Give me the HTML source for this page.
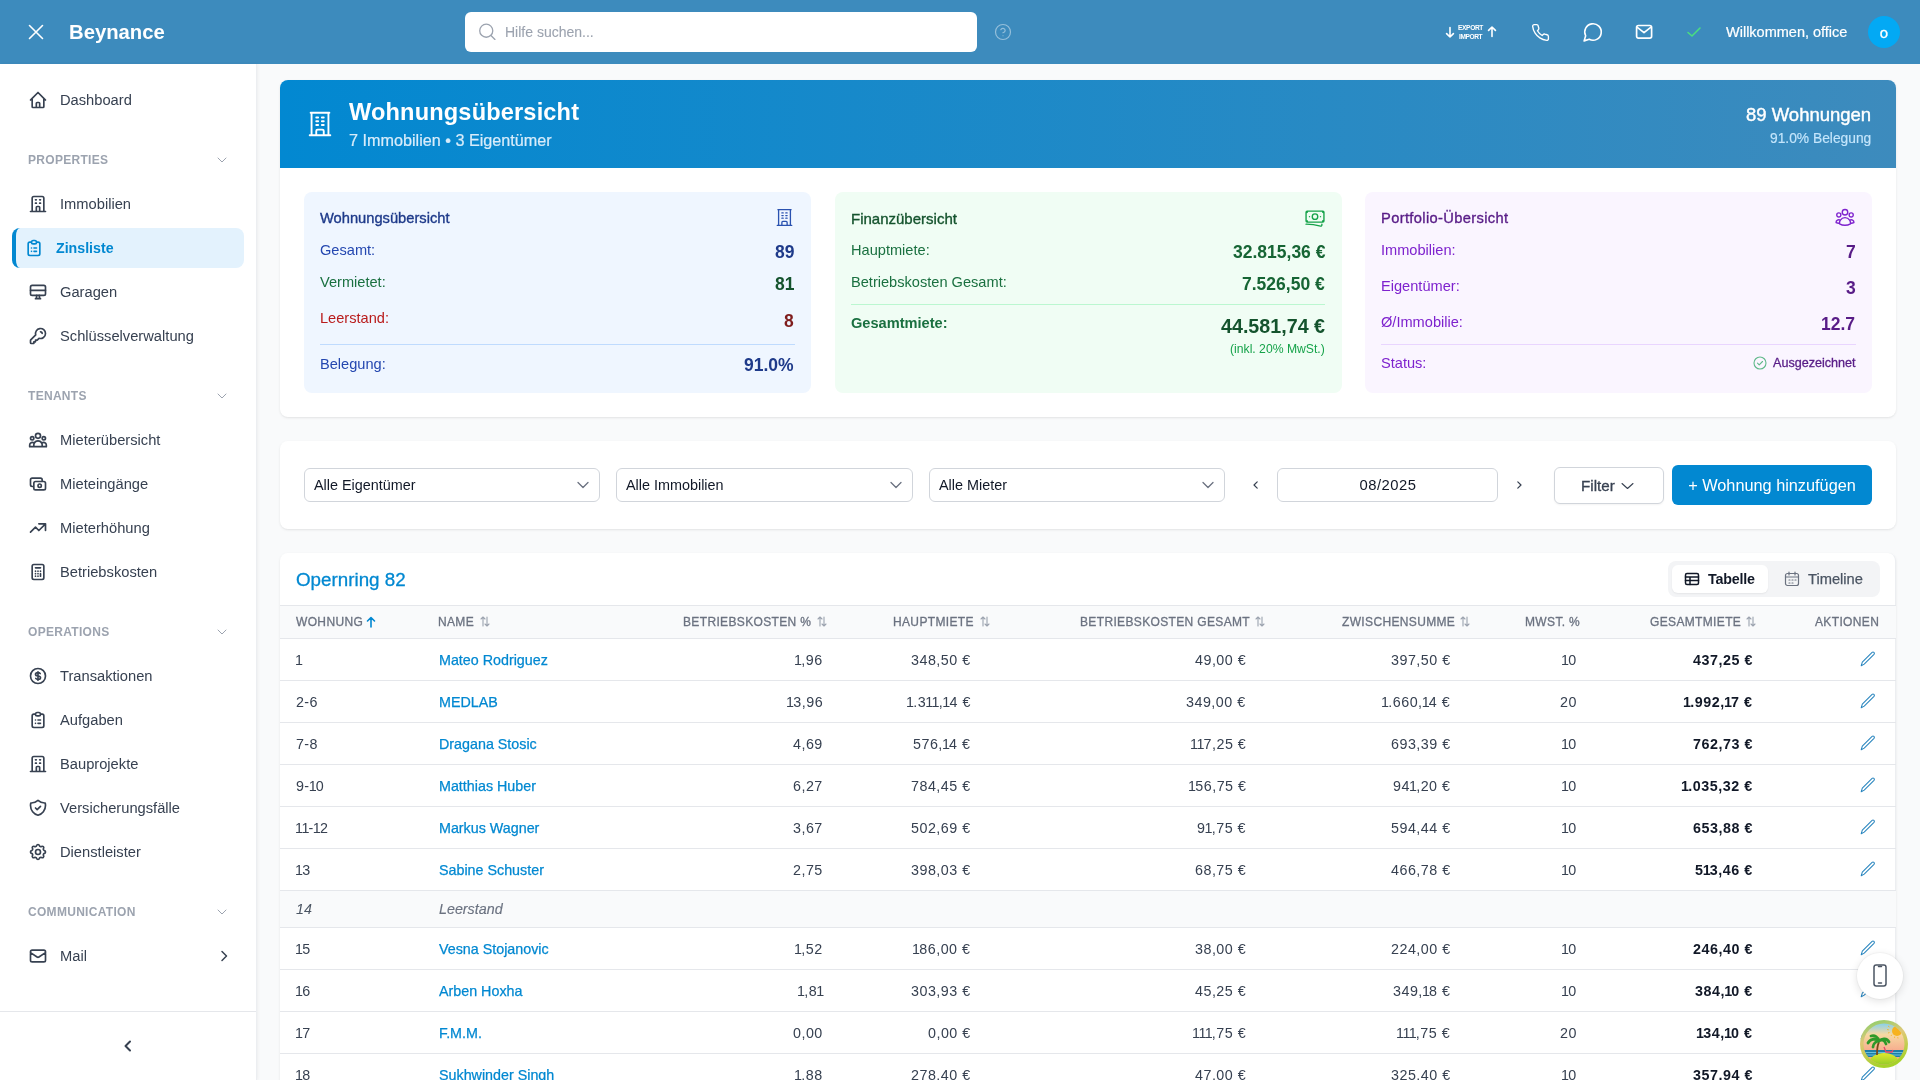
<!DOCTYPE html>
<html><head><meta charset="utf-8">
<style>
*{box-sizing:border-box;margin:0;padding:0}
html,body{width:1920px;height:1080px;overflow:hidden}
body{font-family:"Liberation Sans",sans-serif;background:#f9fafb;color:#374151;position:relative}
.abs{position:absolute}
svg{display:block}
.t{position:absolute;white-space:nowrap;line-height:1;-webkit-font-smoothing:antialiased}
body>div,body>svg{will-change:transform}
</style></head>
<body>
<div class="abs" style="left:0px;top:0px;width:1920px;height:64px;background:#3d8bbd"></div>
<svg class="abs" style="left:28px;top:24px" width="16" height="16" viewBox="0 0 16 16" fill="none" stroke="#fff" stroke-width="1.6" stroke-linecap="round" stroke-linejoin="round"><path d="M1.5 1.5l13 13M14.5 1.5l-13 13"/></svg>
<div class="t" style="top:21.82px;font-size:20.3px;color:#fff;font-weight:700;left:68.5px;">Beynance</div>
<div class="abs" style="left:465px;top:12px;width:512px;height:40px;background:#fff;border-radius:6px"></div>
<svg class="abs" style="left:477.5px;top:23px" width="18" height="18" viewBox="0 0 24 24" fill="none" stroke="#9ca3af" stroke-width="1.75" stroke-linecap="round" stroke-linejoin="round"><circle cx="11" cy="10.3" r="8.7"/><path d="M17.3 16.6L22.6 21.9"/></svg>
<div class="t" style="top:25.05px;font-size:14px;color:#9ca3af;-webkit-text-stroke:0.1px #9ca3af;left:505px;">Hilfe suchen...</div>
<svg class="abs" style="left:994px;top:23px" width="18" height="18" viewBox="0 0 24 24" fill="none" stroke="rgba(255,255,255,0.45)" stroke-width="1.6" stroke-linecap="round" stroke-linejoin="round"><circle cx="12" cy="12" r="10"/><path d="M9.1 9a3 3 0 0 1 5.8 1c0 2-3 3-3 3"/><path d="M12 17h.01"/></svg>
<svg class="abs" style="left:1444px;top:26px" width="12" height="12" viewBox="0 0 12 12" fill="none" stroke="#fff" stroke-width="1.6" stroke-linecap="round" stroke-linejoin="round"><path d="M6 1.5v9.5M2.6 7.6L6 11l3.4-3.4"/></svg>
<div class="t" style="top:24.61px;font-size:6.6px;color:#fff;font-weight:700;letter-spacing:-0.35px;left:1458px;">EXPORT</div>
<div class="t" style="top:33.61px;font-size:6.6px;color:#fff;font-weight:700;letter-spacing:-0.4px;left:1459px;">IMPORT</div>
<svg class="abs" style="left:1486px;top:26px" width="12" height="12" viewBox="0 0 12 12" fill="none" stroke="#fff" stroke-width="1.6" stroke-linecap="round" stroke-linejoin="round"><path d="M6 10.5V1M2.6 4.4L6 1l3.4 3.4"/></svg>
<svg class="abs" style="left:1530.6px;top:22.6px" width="19" height="19" viewBox="0 0 24 24" fill="none" stroke="#fff" stroke-width="1.7" stroke-linecap="round" stroke-linejoin="round"><path d="M22 16.9v3a2 2 0 0 1-2.2 2 19.8 19.8 0 0 1-8.6-3.1 19.5 19.5 0 0 1-6-6A19.8 19.8 0 0 1 2.1 4.2 2 2 0 0 1 4.1 2h3a2 2 0 0 1 2 1.7c.1.9.4 1.8.7 2.7a2 2 0 0 1-.5 2.1L8.1 9.8a16 16 0 0 0 6 6l1.3-1.3a2 2 0 0 1 2.1-.4c.9.3 1.8.6 2.7.7a2 2 0 0 1 1.7 2z"/></svg>
<svg class="abs" style="left:1581.5px;top:20.8px" width="22" height="22" viewBox="0 0 24 24" fill="none" stroke="#fff" stroke-width="1.75" stroke-linecap="round" stroke-linejoin="round"><path d="M7.9 20A9 9 0 1 0 4 16.1L2.3 21.7z"/></svg>
<svg class="abs" style="left:1634.3px;top:23px" width="20" height="17" viewBox="0 0 20 17" fill="none" stroke="#fff" stroke-width="1.7" stroke-linecap="round" stroke-linejoin="round"><rect x="2.6" y="2.5" width="15" height="12.6" rx="1.8"/><path d="M3 4.2L10 9.6 17 4.2"/></svg>
<svg class="abs" style="left:1686px;top:24px" width="16" height="16" viewBox="0 0 16 16" fill="none" stroke="#4ade80" stroke-width="1.6" stroke-linecap="round" stroke-linejoin="round"><path d="M2 8.5l4 3.5 8-8"/></svg>
<div class="t" style="top:25.33px;font-size:14.5px;color:#fff;-webkit-text-stroke:0.2px #fff;left:1726px;">Willkommen, office</div>
<div class="abs" style="left:1868px;top:16px;width:32px;height:32px;background:#03a9f4;border-radius:50%"></div>
<div class="t" style="top:24.90px;font-size:15px;color:#fff;-webkit-text-stroke:0.3px #fff;left:1584px;width:600px;text-align:center;">o</div>
<div class="abs" style="left:0px;top:64px;width:256px;height:1016px;background:#fff;box-shadow:1px 0 3px rgba(0,0,0,0.05);border-right:1px solid #eceef1;width:257px"></div>
<svg class="abs" style="left:28px;top:90px" width="20" height="20" viewBox="0 0 24 24" fill="none" stroke="#374151" stroke-width="2" stroke-linecap="round" stroke-linejoin="round"><path d="M3 12l2-2m0 0l7-7 7 7M5 10v10a1 1 0 001 1h3m10-11l2 2m-2-2v10a1 1 0 01-1 1h-3m-6 0a1 1 0 001-1v-4a1 1 0 011-1h2a1 1 0 011 1v4a1 1 0 001 1m-6 0h6"/></svg>
<div class="t" style="top:92.86px;font-size:14.7px;color:#374151;left:60px;">Dashboard</div>
<div class="t" style="top:154.24px;font-size:12px;color:#9ca3af;font-weight:700;letter-spacing:0.3px;left:28px;">PROPERTIES</div>
<svg class="abs" style="left:216px;top:156px" width="12" height="8" viewBox="0 0 12 8" fill="none" stroke="#9ca3af" stroke-width="1" stroke-linecap="round" stroke-linejoin="round"><path d="M2 2l4 4 4-4"/></svg>
<svg class="abs" style="left:28px;top:194px" width="20" height="20" viewBox="0 0 24 24" fill="none" stroke="#374151" stroke-width="2" stroke-linecap="round" stroke-linejoin="round"><path d="M19 21V5a2 2 0 00-2-2H7a2 2 0 00-2 2v16m14 0h2m-2 0h-5m-9 0H3m2 0h5M9 7h1m-1 4h1m4-4h1m-1 4h1m-5 10v-5a1 1 0 011-1h2a1 1 0 011 1v5m-4 0h4"/></svg>
<div class="t" style="top:196.86px;font-size:14.7px;color:#374151;left:60px;">Immobilien</div>
<div class="abs" style="left:12px;top:228px;width:232px;height:40px;background:#e3f2fd;border-radius:8px;border-left:4px solid #0288d1"></div>
<svg class="abs" style="left:24px;top:238px" width="20" height="20" viewBox="0 0 24 24" fill="none" stroke="#0288d1" stroke-width="2" stroke-linecap="round" stroke-linejoin="round"><path d="M9 5H7a2 2 0 00-2 2v12a2 2 0 002 2h10a2 2 0 002-2V7a2 2 0 00-2-2h-2M9 5a2 2 0 002 2h2a2 2 0 002-2M9 5a2 2 0 012-2h2a2 2 0 012 2m-3 7h3m-3 4h3m-6-4h.01M9 16h.01"/></svg>
<div class="t" style="top:241.08px;font-size:14.2px;color:#0288d1;font-weight:700;left:55.6px;">Zinsliste</div>
<svg class="abs" style="left:28px;top:282px" width="20" height="20" viewBox="0 0 24 24" fill="none" stroke="#374151" stroke-width="2" stroke-linecap="round" stroke-linejoin="round"><rect x="3" y="4" width="18" height="12" rx="2"/><path d="M3 10h18M9 20h6M10.5 16l-.5 4M13.5 16l.5 4"/></svg>
<div class="t" style="top:284.86px;font-size:14.7px;color:#374151;left:60px;">Garagen</div>
<svg class="abs" style="left:28px;top:326px" width="20" height="20" viewBox="0 0 24 24" fill="none" stroke="#374151" stroke-width="2" stroke-linecap="round" stroke-linejoin="round"><path d="M15 7a2 2 0 012 2m4 0a6 6 0 01-7.743 5.743L11 17H9v2H7v2H4a1 1 0 01-1-1v-2.586a1 1 0 01.293-.707l5.964-5.964A6 6 0 1121 9z"/></svg>
<div class="t" style="top:328.86px;font-size:14.7px;color:#374151;left:60px;">Schlüsselverwaltung</div>
<div class="t" style="top:390.24px;font-size:12px;color:#9ca3af;font-weight:700;letter-spacing:0.3px;left:28px;">TENANTS</div>
<svg class="abs" style="left:216px;top:392px" width="12" height="8" viewBox="0 0 12 8" fill="none" stroke="#9ca3af" stroke-width="1" stroke-linecap="round" stroke-linejoin="round"><path d="M2 2l4 4 4-4"/></svg>
<svg class="abs" style="left:28px;top:430px" width="20" height="20" viewBox="0 0 24 24" fill="none" stroke="#374151" stroke-width="2" stroke-linecap="round" stroke-linejoin="round"><path d="M17 20h5v-2a3 3 0 00-5.356-1.857M17 20H7m10 0v-2c0-.656-.126-1.283-.356-1.857M7 20H2v-2a3 3 0 015.356-1.857M7 20v-2c0-.656.126-1.283.356-1.857m0 0a5.002 5.002 0 019.288 0M15 7a3 3 0 11-6 0 3 3 0 016 0zm6 3a2 2 0 11-4 0 2 2 0 014 0zM7 10a2 2 0 11-4 0 2 2 0 014 0z"/></svg>
<div class="t" style="top:432.86px;font-size:14.7px;color:#374151;left:60px;">Mieterübersicht</div>
<svg class="abs" style="left:28px;top:474px" width="20" height="20" viewBox="0 0 24 24" fill="none" stroke="#374151" stroke-width="2" stroke-linecap="round" stroke-linejoin="round"><path d="M17 9V7a2 2 0 00-2-2H5a2 2 0 00-2 2v6a2 2 0 002 2h2m2 4h10a2 2 0 002-2v-6a2 2 0 00-2-2H9a2 2 0 00-2 2v6a2 2 0 002 2zm7-5a2 2 0 11-4 0 2 2 0 014 0z"/></svg>
<div class="t" style="top:476.86px;font-size:14.7px;color:#374151;left:60px;">Mieteingänge</div>
<svg class="abs" style="left:28px;top:518px" width="20" height="20" viewBox="0 0 24 24" fill="none" stroke="#374151" stroke-width="2" stroke-linecap="round" stroke-linejoin="round"><path d="M13 7h8m0 0v8m0-8l-8 8-4-4-6 6"/></svg>
<div class="t" style="top:520.86px;font-size:14.7px;color:#374151;left:60px;">Mieterhöhung</div>
<svg class="abs" style="left:28px;top:562px" width="20" height="20" viewBox="0 0 24 24" fill="none" stroke="#374151" stroke-width="2" stroke-linecap="round" stroke-linejoin="round"><path d="M9 7h6m0 10v-3m-3 3h.01M9 17h.01M9 14h.01M12 14h.01M15 11h.01M12 11h.01M9 11h.01M7 21h10a2 2 0 002-2V5a2 2 0 00-2-2H7a2 2 0 00-2 2v14a2 2 0 002 2z"/></svg>
<div class="t" style="top:564.86px;font-size:14.7px;color:#374151;left:60px;">Betriebskosten</div>
<div class="t" style="top:626.24px;font-size:12px;color:#9ca3af;font-weight:700;letter-spacing:0.3px;left:28px;">OPERATIONS</div>
<svg class="abs" style="left:216px;top:628px" width="12" height="8" viewBox="0 0 12 8" fill="none" stroke="#9ca3af" stroke-width="1" stroke-linecap="round" stroke-linejoin="round"><path d="M2 2l4 4 4-4"/></svg>
<svg class="abs" style="left:28px;top:666px" width="20" height="20" viewBox="0 0 24 24" fill="none" stroke="#374151" stroke-width="2" stroke-linecap="round" stroke-linejoin="round"><path d="M12 8c-1.657 0-3 .895-3 2s1.343 2 3 2 3 .895 3 2-1.343 2-3 2m0-8c1.11 0 2.08.402 2.599 1M12 8V7m0 1v8m0 0v1m0-1c-1.11 0-2.08-.402-2.599-1M21 12a9 9 0 11-18 0 9 9 0 0118 0z"/></svg>
<div class="t" style="top:668.86px;font-size:14.7px;color:#374151;left:60px;">Transaktionen</div>
<svg class="abs" style="left:28px;top:710px" width="20" height="20" viewBox="0 0 24 24" fill="none" stroke="#374151" stroke-width="2" stroke-linecap="round" stroke-linejoin="round"><path d="M9 5H7a2 2 0 00-2 2v12a2 2 0 002 2h10a2 2 0 002-2V7a2 2 0 00-2-2h-2M9 5a2 2 0 002 2h2a2 2 0 002-2M9 5a2 2 0 012-2h2a2 2 0 012 2m-3 7h3m-3 4h3m-6-4h.01M9 16h.01"/></svg>
<div class="t" style="top:712.86px;font-size:14.7px;color:#374151;left:60px;">Aufgaben</div>
<svg class="abs" style="left:28px;top:754px" width="20" height="20" viewBox="0 0 24 24" fill="none" stroke="#374151" stroke-width="2" stroke-linecap="round" stroke-linejoin="round"><path d="M19 21V5a2 2 0 00-2-2H7a2 2 0 00-2 2v16m14 0h2m-2 0h-5m-9 0H3m2 0h5M9 7h1m-1 4h1m4-4h1m-1 4h1m-5 10v-5a1 1 0 011-1h2a1 1 0 011 1v5m-4 0h4"/></svg>
<div class="t" style="top:756.86px;font-size:14.7px;color:#374151;left:60px;">Bauprojekte</div>
<svg class="abs" style="left:28px;top:798px" width="20" height="20" viewBox="0 0 24 24" fill="none" stroke="#374151" stroke-width="2" stroke-linecap="round" stroke-linejoin="round"><path d="M9 12l2 2 4-4m5.618-4.016A11.955 11.955 0 0112 2.944a11.955 11.955 0 01-8.618 3.04A12.02 12.02 0 003 9c0 5.591 3.824 10.29 9 11.622 5.176-1.332 9-6.03 9-11.622 0-1.042-.133-2.052-.382-3.016z"/></svg>
<div class="t" style="top:800.86px;font-size:14.7px;color:#374151;left:60px;">Versicherungsfälle</div>
<svg class="abs" style="left:28px;top:842px" width="20" height="20" viewBox="0 0 24 24" fill="none" stroke="#374151" stroke-width="2" stroke-linecap="round" stroke-linejoin="round"><path d="M10.325 4.317c.426-1.756 2.924-1.756 3.35 0a1.724 1.724 0 002.573 1.066c1.543-.94 3.31.826 2.37 2.37a1.724 1.724 0 001.065 2.572c1.756.426 1.756 2.924 0 3.35a1.724 1.724 0 00-1.066 2.573c.94 1.543-.826 3.31-2.37 2.37a1.724 1.724 0 00-2.572 1.065c-.426 1.756-2.924 1.756-3.35 0a1.724 1.724 0 00-2.573-1.066c-1.543.94-3.31-.826-2.37-2.37a1.724 1.724 0 00-1.065-2.572c-1.756-.426-1.756-2.924 0-3.35a1.724 1.724 0 001.066-2.573c-.94-1.543.826-3.31 2.37-2.37.996.608 2.296.07 2.572-1.065z"/><path d="M15 12a3 3 0 11-6 0 3 3 0 016 0z"/></svg>
<div class="t" style="top:844.86px;font-size:14.7px;color:#374151;left:60px;">Dienstleister</div>
<div class="t" style="top:906.24px;font-size:12px;color:#9ca3af;font-weight:700;letter-spacing:0.3px;left:28px;">COMMUNICATION</div>
<svg class="abs" style="left:216px;top:908px" width="12" height="8" viewBox="0 0 12 8" fill="none" stroke="#9ca3af" stroke-width="1" stroke-linecap="round" stroke-linejoin="round"><path d="M2 2l4 4 4-4"/></svg>
<svg class="abs" style="left:28px;top:946px" width="20" height="20" viewBox="0 0 24 24" fill="none" stroke="#374151" stroke-width="2" stroke-linecap="round" stroke-linejoin="round"><path d="M3 8l7.89 5.26a2 2 0 002.22 0L21 8M5 19h14a2 2 0 002-2V7a2 2 0 00-2-2H5a2 2 0 00-2 2v10a2 2 0 002 2z"/></svg>
<div class="t" style="top:948.86px;font-size:14.7px;color:#374151;left:60px;">Mail</div>
<svg class="abs" style="left:218px;top:950px" width="12" height="12" viewBox="0 0 12 12" fill="none" stroke="#374151" stroke-width="1.5" stroke-linecap="round" stroke-linejoin="round"><path d="M4 1.5l4.5 4.5L4 10.5"/></svg>
<div class="abs" style="left:0px;top:1011px;width:256px;height:1px;background:#e5e7eb"></div>
<svg class="abs" style="left:122px;top:1040px" width="12" height="12" viewBox="0 0 12 12" fill="none" stroke="#374151" stroke-width="2" stroke-linecap="round" stroke-linejoin="round"><path d="M8 1.5L3.5 6 8 10.5"/></svg>
<div class="abs" style="left:280px;top:80px;width:1616px;height:337px;background:#fff;border-radius:8px;box-shadow:0 1px 3px rgba(0,0,0,0.07),0 1px 2px rgba(0,0,0,0.04);overflow:hidden"></div>
<div class="abs" style="left:280px;top:80px;width:1616px;height:88px;background:linear-gradient(90deg,#0288d1 0%,#3d8bbd 100%);border-radius:8px 8px 0 0"></div>
<svg class="abs" style="left:305px;top:109px" width="30" height="30" viewBox="0 0 24 24" fill="none" stroke="#fff" stroke-width="1.5" stroke-linecap="round" stroke-linejoin="round"><path d="M3.75 21h16.5M4.5 3h15M5.25 3v18m13.5-18v18M9 6.75h1.5m-1.5 3h1.5m-1.5 3h1.5m3-6H15m-1.5 3H15m-1.5 3H15M9 21v-3.375c0-.621.504-1.125 1.125-1.125h3.75c.621 0 1.125.504 1.125 1.125V21"/></svg>
<div class="t" style="top:101.42px;font-size:23.6px;color:#fff;font-weight:700;letter-spacing:0.15px;left:349px;">Wohnungsübersicht</div>
<div class="t" style="top:132.09px;font-size:16.2px;color:#d8ecfa;-webkit-text-stroke:0.2px #d8ecfa;left:349px;">7 Immobilien • 3 Eigentümer</div>
<div class="t" style="top:105.59px;font-size:18.5px;color:#fff;-webkit-text-stroke:0.4px #fff;right:48.50px;">89 Wohnungen</div>
<div class="t" style="top:131.52px;font-size:13.8px;color:#c4e5fb;-webkit-text-stroke:0.15px #c4e5fb;right:49.00px;">91.0% Belegung</div>
<div class="abs" style="left:304px;top:192px;width:507px;height:201px;background:#eff6ff;border-radius:8px"></div>
<div class="abs" style="left:835px;top:192px;width:507px;height:201px;background:#f0fdf4;border-radius:8px"></div>
<div class="abs" style="left:1365px;top:192px;width:507px;height:201px;background:#faf5ff;border-radius:8px"></div>
<div class="t" style="top:210.96px;font-size:14.7px;color:#1e3a8a;-webkit-text-stroke:0.35px #1e3a8a;left:320px;">Wohnungsübersicht</div>
<svg class="abs" style="left:774px;top:207px" width="21" height="21" viewBox="0 0 24 24" fill="none" stroke="#2a52b0" stroke-width="1.5" stroke-linecap="round" stroke-linejoin="round"><path d="M3.75 21h16.5M4.5 3h15M5.25 3v18m13.5-18v18M9 6.75h1.5m-1.5 3h1.5m-1.5 3h1.5m3-6H15m-1.5 3H15m-1.5 3H15M9 21v-3.375c0-.621.504-1.125 1.125-1.125h3.75c.621 0 1.125.504 1.125 1.125V21"/></svg>
<div class="t" style="top:243.34px;font-size:14.6px;color:#2447b0;left:320px;">Gesamt:</div>
<div class="t" style="top:244.49px;font-size:17.5px;color:#1e3a8a;font-weight:700;right:1126.00px;">89</div>
<div class="t" style="top:275.44px;font-size:14.6px;color:#1a7040;left:320px;">Vermietet:</div>
<div class="t" style="top:276.29px;font-size:17.5px;color:#14532d;font-weight:700;right:1126.00px;">81</div>
<div class="t" style="top:311.44px;font-size:14.6px;color:#b91c1c;left:320px;">Leerstand:</div>
<div class="t" style="top:312.59px;font-size:17.5px;color:#7f1d1d;font-weight:700;right:1126.00px;">8</div>
<div class="abs" style="left:320px;top:344px;width:475px;height:1px;background:#bfdbfe"></div>
<div class="t" style="top:356.54px;font-size:14.6px;color:#2447b0;left:320px;">Belegung:</div>
<div class="t" style="top:357.39px;font-size:17.5px;color:#1e3a8a;font-weight:700;right:1126.00px;">91.0%</div>
<div class="t" style="top:210.70px;font-size:15px;color:#14532d;-webkit-text-stroke:0.35px #14532d;left:851px;">Finanzübersicht</div>
<svg class="abs" style="left:1304px;top:207px" width="22" height="22" viewBox="0 0 24 24" fill="none" stroke="#16a34a" stroke-width="1.5" stroke-linecap="round" stroke-linejoin="round"><path d="M2.25 18.75a60.07 60.07 0 0 1 15.797 2.101c.727.198 1.453-.342 1.453-1.096V18.75M3.75 4.5v.75A.75.75 0 0 1 3 6h-.75m0 0v-.375c0-.621.504-1.125 1.125-1.125H20.25M2.25 6v9m18-10.5v.75c0 .414.336.75.75.75h.75m-1.5-1.5h.375c.621 0 1.125.504 1.125 1.125v9.75c0 .621-.504 1.125-1.125 1.125h-.375m1.5-1.5H21a.75.75 0 0 0-.75.75v.75m0 0H3.75m0 0h-.375a1.125 1.125 0 0 1-1.125-1.125V15m1.5 1.5v-.75A.75.75 0 0 0 3 15h-.75M15 10.5a3 3 0 1 1-6 0 3 3 0 0 1 6 0Zm3 0h.008v.008H18V10.5Zm-12 0h.008v.008H6V10.5Z"/></svg>
<div class="t" style="top:242.64px;font-size:14.6px;color:#1a7040;left:851px;">Hauptmiete:</div>
<div class="t" style="top:243.89px;font-size:17.5px;color:#166534;font-weight:700;right:595.00px;">32.815,36 €</div>
<div class="t" style="top:274.64px;font-size:14.6px;color:#1a7040;left:851px;">Betriebskosten Gesamt:</div>
<div class="t" style="top:275.89px;font-size:17.5px;color:#166534;font-weight:700;right:595.00px;">7.526,50 €</div>
<div class="abs" style="left:851px;top:304px;width:474px;height:1px;background:#bbf7d0"></div>
<div class="t" style="top:316.04px;font-size:14.6px;color:#1a7040;font-weight:700;left:851px;">Gesamtmiete:</div>
<div class="t" style="top:317.32px;font-size:19.7px;color:#14532d;font-weight:700;right:595.00px;">44.581,74 €</div>
<div class="t" style="top:342.67px;font-size:12.2px;color:#16a34a;right:595.00px;">(inkl. 20% MwSt.)</div>
<div class="t" style="top:211.16px;font-size:14.7px;color:#581c87;-webkit-text-stroke:0.35px #581c87;letter-spacing:0.35px;left:1381px;">Portfolio-Übersicht</div>
<svg class="abs" style="left:1834px;top:206px" width="22" height="22" viewBox="0 0 24 24" fill="none" stroke="#7e22ce" stroke-width="1.5" stroke-linecap="round" stroke-linejoin="round"><path d="M18 18.72a9.094 9.094 0 0 0 3.741-.479 3 3 0 0 0-4.682-2.72m.94 3.198.001.031c0 .225-.012.447-.037.666A11.944 11.944 0 0 1 12 21c-2.17 0-4.207-.576-5.963-1.584A6.062 6.062 0 0 1 6 18.719m12 0a5.971 5.971 0 0 0-.941-3.197m0 0A5.995 5.995 0 0 0 12 12.75a5.995 5.995 0 0 0-5.058 2.772m0 0a3 3 0 0 0-4.681 2.72 8.986 8.986 0 0 0 3.74.477m.94-3.197a5.971 5.971 0 0 0-.94 3.197M15 6.75a3 3 0 1 1-6 0 3 3 0 0 1 6 0Zm6 3a2.25 2.25 0 1 1-4.5 0 2.25 2.25 0 0 1 4.5 0Zm-13.5 0a2.25 2.25 0 1 1-4.5 0 2.25 2.25 0 0 1 4.5 0Z"/></svg>
<div class="t" style="top:243.04px;font-size:14.6px;color:#7e22ce;left:1381px;">Immobilien:</div>
<div class="t" style="top:244.49px;font-size:17.5px;color:#581c87;font-weight:700;right:64.50px;">7</div>
<div class="t" style="top:278.64px;font-size:14.6px;color:#7e22ce;left:1381px;">Eigentümer:</div>
<div class="t" style="top:279.89px;font-size:17.5px;color:#581c87;font-weight:700;right:64.50px;">3</div>
<div class="t" style="top:315.24px;font-size:14.6px;color:#7e22ce;left:1381px;">Ø/Immobilie:</div>
<div class="t" style="top:315.89px;font-size:17.5px;color:#581c87;font-weight:700;right:64.50px;">12.7</div>
<div class="abs" style="left:1381px;top:344px;width:475px;height:1px;background:#e9d5ff"></div>
<div class="t" style="top:355.64px;font-size:14.6px;color:#7e22ce;left:1381px;">Status:</div>
<svg class="abs" style="left:1753px;top:356px" width="14" height="14" viewBox="0 0 14 14" fill="none" stroke="#5fb98a" stroke-width="1.1" stroke-linecap="round" stroke-linejoin="round"><circle cx="7" cy="7" r="6"/><path d="M4.5 7.2l1.7 1.6 3.3-3.3"/></svg>
<div class="t" style="top:356.63px;font-size:12.6px;color:#581c87;-webkit-text-stroke:0.3px #581c87;right:64.20px;">Ausgezeichnet</div>
<div class="abs" style="left:280px;top:441px;width:1616px;height:88px;background:#fff;border-radius:8px;box-shadow:0 1px 3px rgba(0,0,0,0.07),0 1px 2px rgba(0,0,0,0.04)"></div>
<div class="abs" style="left:304px;top:468px;width:296px;height:34px;background:#fff;border:1px solid #d1d5db;border-radius:6px"></div>
<div class="t" style="top:478.11px;font-size:14.4px;color:#111827;left:313.5px;">Alle Eigentümer</div>
<svg class="abs" style="left:577px;top:481px" width="12" height="8" viewBox="0 0 12 8" fill="none" stroke="#6b7280" stroke-width="1.3" stroke-linecap="round" stroke-linejoin="round"><path d="M1 1.5l5 5 5-5"/></svg>
<div class="abs" style="left:616px;top:468px;width:297px;height:34px;background:#fff;border:1px solid #d1d5db;border-radius:6px"></div>
<div class="t" style="top:478.11px;font-size:14.4px;color:#111827;left:625.5px;">Alle Immobilien</div>
<svg class="abs" style="left:890px;top:481px" width="12" height="8" viewBox="0 0 12 8" fill="none" stroke="#6b7280" stroke-width="1.3" stroke-linecap="round" stroke-linejoin="round"><path d="M1 1.5l5 5 5-5"/></svg>
<div class="abs" style="left:929px;top:468px;width:296px;height:34px;background:#fff;border:1px solid #d1d5db;border-radius:6px"></div>
<div class="t" style="top:478.11px;font-size:14.4px;color:#111827;left:938.5px;">Alle Mieter</div>
<svg class="abs" style="left:1202px;top:481px" width="12" height="8" viewBox="0 0 12 8" fill="none" stroke="#6b7280" stroke-width="1.3" stroke-linecap="round" stroke-linejoin="round"><path d="M1 1.5l5 5 5-5"/></svg>
<svg class="abs" style="left:1251px;top:480px" width="10" height="10" viewBox="0 0 10 10" fill="none" stroke="#374151" stroke-width="1.2" stroke-linecap="round" stroke-linejoin="round"><path d="M6.2 1.8L3 5l3.2 3.2"/></svg>
<div class="abs" style="left:1277px;top:468px;width:221px;height:34px;background:#fff;border:1px solid #d1d5db;border-radius:6px"></div>
<div class="t" style="top:477.97px;font-size:14.8px;color:#111827;letter-spacing:0.5px;left:1087.5px;width:600px;text-align:center;">08/2025</div>
<svg class="abs" style="left:1514px;top:480px" width="10" height="10" viewBox="0 0 10 10" fill="none" stroke="#374151" stroke-width="1.2" stroke-linecap="round" stroke-linejoin="round"><path d="M3.8 1.8L7 5 3.8 8.2"/></svg>
<div class="abs" style="left:1554px;top:467px;width:110px;height:37px;background:#fff;border:1px solid #d1d5db;border-radius:6px;box-shadow:0 1px 2px rgba(0,0,0,0.05)"></div>
<div class="t" style="top:478.33px;font-size:15.2px;color:#374151;-webkit-text-stroke:0.3px #374151;left:1581.4px;">Filter</div>
<svg class="abs" style="left:1621px;top:482px" width="13" height="8" viewBox="0 0 13 8" fill="none" stroke="#374151" stroke-width="1.1" stroke-linecap="round" stroke-linejoin="round"><path d="M1 1.5l5.5 5 5.5-5"/></svg>
<div class="abs" style="left:1672px;top:465px;width:200px;height:40px;background:#0288d1;border-radius:6px"></div>
<div class="t" style="top:477.45px;font-size:16.3px;color:#fff;left:1471.5px;width:600px;text-align:center;">+ Wohnung hinzufügen</div>
<div class="abs" style="left:280px;top:553px;width:1616px;height:560px;background:#fff;border-radius:8px;box-shadow:0 1px 3px rgba(0,0,0,0.07),0 1px 2px rgba(0,0,0,0.04);border-right:1px solid #eceef1"></div>
<div class="t" style="top:570.79px;font-size:18.8px;color:#0288d1;-webkit-text-stroke:0.3px #0288d1;left:296px;">Opernring 82</div>
<div class="abs" style="left:1668px;top:561px;width:212px;height:36px;background:#f3f4f6;border-radius:8px"></div>
<div class="abs" style="left:1672px;top:565px;width:96px;height:28px;background:#fff;border-radius:6px;box-shadow:0 1px 2px rgba(0,0,0,0.06)"></div>
<svg class="abs" style="left:1684px;top:572px" width="16" height="14" viewBox="0 0 16 14" fill="none" stroke="#111827" stroke-width="1.5" stroke-linecap="round" stroke-linejoin="round"><rect x="1.5" y="1.5" width="13" height="11" rx="1.5"/><path d="M1.5 5h13M1.5 8.5h13M6 5v7.5"/></svg>
<div class="t" style="top:571.90px;font-size:14.3px;color:#111827;font-weight:700;letter-spacing:-0.2px;left:1708px;">Tabelle</div>
<svg class="abs" style="left:1784px;top:571px" width="16" height="16" viewBox="0 0 16 16" fill="none" stroke="#6b7280" stroke-width="1.2" stroke-linecap="round" stroke-linejoin="round"><rect x="1.5" y="2.5" width="13" height="12" rx="2"/><path d="M1.5 6h13M5 1v3M11 1v3M5 9h1M8 9h1M11 9h1M5 12h1M8 12h1"/></svg>
<div class="t" style="top:571.56px;font-size:14.7px;color:#4b5563;-webkit-text-stroke:0.25px #4b5563;left:1808px;">Timeline</div>
<div class="abs" style="left:280px;top:605px;width:1616px;height:34px;background:#f9fafb;border-top:1px solid #e5e7eb;border-bottom:1px solid #e5e7eb"></div>
<div class="t" style="top:616.04px;font-size:12px;color:#6b7280;-webkit-text-stroke:0.3px #6b7280;letter-spacing:0.35px;left:296.3px;">WOHNUNG</div>
<svg class="abs" style="left:366px;top:615.5px" width="10" height="12" viewBox="0 0 10 12" fill="none" stroke="#0288d1" stroke-width="1.6" stroke-linecap="round" stroke-linejoin="round"><path d="M5 11V1.5M1.5 5L5 1.5 8.5 5"/></svg>
<div class="t" style="top:616.04px;font-size:12px;color:#6b7280;-webkit-text-stroke:0.3px #6b7280;letter-spacing:0.35px;left:438.4px;">NAME</div>
<svg class="abs" style="left:479.5px;top:616px" width="10" height="11" viewBox="0 0 10 11" fill="none" stroke="#9ca3af" stroke-width="1.1" stroke-linecap="round" stroke-linejoin="round"><path d="M3 10V1M1 3l2-2 2 2M7 1v9M5 8l2 2 2-2"/></svg>
<div class="t" style="top:616.04px;font-size:12px;color:#6b7280;-webkit-text-stroke:0.3px #6b7280;letter-spacing:0.35px;right:1108.60px;">BETRIEBSKOSTEN %</div>
<svg class="abs" style="left:816.5px;top:616px" width="10" height="11" viewBox="0 0 10 11" fill="none" stroke="#9ca3af" stroke-width="1.1" stroke-linecap="round" stroke-linejoin="round"><path d="M3 10V1M1 3l2-2 2 2M7 1v9M5 8l2 2 2-2"/></svg>
<div class="t" style="top:616.04px;font-size:12px;color:#6b7280;-webkit-text-stroke:0.3px #6b7280;letter-spacing:0.35px;right:945.70px;">HAUPTMIETE</div>
<svg class="abs" style="left:979.5px;top:616px" width="10" height="11" viewBox="0 0 10 11" fill="none" stroke="#9ca3af" stroke-width="1.1" stroke-linecap="round" stroke-linejoin="round"><path d="M3 10V1M1 3l2-2 2 2M7 1v9M5 8l2 2 2-2"/></svg>
<div class="t" style="top:616.04px;font-size:12px;color:#6b7280;-webkit-text-stroke:0.3px #6b7280;letter-spacing:0.35px;right:670.10px;">BETRIEBSKOSTEN GESAMT</div>
<svg class="abs" style="left:1255px;top:616px" width="10" height="11" viewBox="0 0 10 11" fill="none" stroke="#9ca3af" stroke-width="1.1" stroke-linecap="round" stroke-linejoin="round"><path d="M3 10V1M1 3l2-2 2 2M7 1v9M5 8l2 2 2-2"/></svg>
<div class="t" style="top:616.04px;font-size:12px;color:#6b7280;-webkit-text-stroke:0.3px #6b7280;letter-spacing:0.35px;right:465.10px;">ZWISCHENSUMME</div>
<svg class="abs" style="left:1459.5px;top:616px" width="10" height="11" viewBox="0 0 10 11" fill="none" stroke="#9ca3af" stroke-width="1.1" stroke-linecap="round" stroke-linejoin="round"><path d="M3 10V1M1 3l2-2 2 2M7 1v9M5 8l2 2 2-2"/></svg>
<div class="t" style="top:616.04px;font-size:12px;color:#6b7280;-webkit-text-stroke:0.3px #6b7280;letter-spacing:0.35px;right:339.80px;">MWST. %</div>
<div class="t" style="top:616.04px;font-size:12px;color:#6b7280;-webkit-text-stroke:0.3px #6b7280;letter-spacing:0.35px;right:178.75px;">GESAMTMIETE</div>
<svg class="abs" style="left:1745.5px;top:616px" width="10" height="11" viewBox="0 0 10 11" fill="none" stroke="#9ca3af" stroke-width="1.1" stroke-linecap="round" stroke-linejoin="round"><path d="M3 10V1M1 3l2-2 2 2M7 1v9M5 8l2 2 2-2"/></svg>
<div class="t" style="top:616.04px;font-size:12px;color:#6b7280;-webkit-text-stroke:0.3px #6b7280;letter-spacing:0.35px;right:40.40px;">AKTIONEN</div>
<div class="abs" style="left:280px;top:639px;width:1616px;height:42px;border-bottom:1px solid #e5e7eb"></div>
<div class="t" style="top:652.70px;font-size:14.3px;color:#374151;letter-spacing:0.4px;left:296.3px;"><span style="margin-left:-0.9px;letter-spacing:-0.8px">1</span></div>
<div class="t" style="top:652.70px;font-size:14.3px;color:#0288d1;-webkit-text-stroke:0.25px #0288d1;left:438.8px;">Mateo Rodriguez</div>
<div class="t" style="top:652.70px;font-size:14.3px;color:#374151;letter-spacing:0.5px;right:1096.90px;"><span style="margin-left:-0.9px;letter-spacing:-0.8px">1</span>,96</div>
<div class="t" style="top:652.70px;font-size:14.3px;color:#374151;letter-spacing:0.5px;right:949.50px;">348,50 €</div>
<div class="t" style="top:652.70px;font-size:14.3px;color:#374151;letter-spacing:0.5px;right:674.00px;">49,00 €</div>
<div class="t" style="top:652.70px;font-size:14.3px;color:#374151;letter-spacing:0.5px;right:469.50px;">397,50 €</div>
<div class="t" style="top:652.70px;font-size:14.3px;color:#374151;letter-spacing:0.5px;right:343.00px;"><span style="margin-left:-0.9px;letter-spacing:-0.8px">1</span>0</div>
<div class="t" style="top:652.70px;font-size:14.3px;color:#111827;font-weight:700;letter-spacing:0.55px;right:167.00px;">437,25 €</div>
<svg class="abs" style="left:1859px;top:651px" width="18" height="17" viewBox="0 0 18 17" fill="none" stroke="#2a86bf" stroke-width="1.05" stroke-linecap="round" stroke-linejoin="round"><path d="M2.2 14.8L3.3 11.1 13.1 1.4A1.35 1.35 0 0 1 15 3.3L5.2 13.1Z"/></svg>
<div class="abs" style="left:280px;top:681px;width:1616px;height:42px;border-bottom:1px solid #e5e7eb"></div>
<div class="t" style="top:694.70px;font-size:14.3px;color:#374151;letter-spacing:0.4px;left:296.3px;">2-6</div>
<div class="t" style="top:694.70px;font-size:14.3px;color:#0288d1;-webkit-text-stroke:0.25px #0288d1;left:438.8px;">MEDLAB</div>
<div class="t" style="top:694.70px;font-size:14.3px;color:#374151;letter-spacing:0.5px;right:1096.90px;"><span style="margin-left:-0.9px;letter-spacing:-0.8px">1</span>3,96</div>
<div class="t" style="top:694.70px;font-size:14.3px;color:#374151;letter-spacing:0.5px;right:949.50px;"><span style="margin-left:-0.9px;letter-spacing:-0.8px">1</span>.3<span style="margin-left:-0.9px;letter-spacing:-0.8px">1</span><span style="margin-left:-0.9px;letter-spacing:-0.8px">1</span>,<span style="margin-left:-0.9px;letter-spacing:-0.8px">1</span>4 €</div>
<div class="t" style="top:694.70px;font-size:14.3px;color:#374151;letter-spacing:0.5px;right:674.00px;">349,00 €</div>
<div class="t" style="top:694.70px;font-size:14.3px;color:#374151;letter-spacing:0.5px;right:469.50px;"><span style="margin-left:-0.9px;letter-spacing:-0.8px">1</span>.660,<span style="margin-left:-0.9px;letter-spacing:-0.8px">1</span>4 €</div>
<div class="t" style="top:694.70px;font-size:14.3px;color:#374151;letter-spacing:0.5px;right:343.00px;">20</div>
<div class="t" style="top:694.70px;font-size:14.3px;color:#111827;font-weight:700;letter-spacing:0.55px;right:167.00px;"><span style="margin-left:-0.9px;letter-spacing:-0.8px">1</span>.992,<span style="margin-left:-0.9px;letter-spacing:-0.8px">1</span>7 €</div>
<svg class="abs" style="left:1859px;top:693px" width="18" height="17" viewBox="0 0 18 17" fill="none" stroke="#2a86bf" stroke-width="1.05" stroke-linecap="round" stroke-linejoin="round"><path d="M2.2 14.8L3.3 11.1 13.1 1.4A1.35 1.35 0 0 1 15 3.3L5.2 13.1Z"/></svg>
<div class="abs" style="left:280px;top:723px;width:1616px;height:42px;border-bottom:1px solid #e5e7eb"></div>
<div class="t" style="top:736.70px;font-size:14.3px;color:#374151;letter-spacing:0.4px;left:296.3px;">7-8</div>
<div class="t" style="top:736.70px;font-size:14.3px;color:#0288d1;-webkit-text-stroke:0.25px #0288d1;left:438.8px;">Dragana Stosic</div>
<div class="t" style="top:736.70px;font-size:14.3px;color:#374151;letter-spacing:0.5px;right:1096.90px;">4,69</div>
<div class="t" style="top:736.70px;font-size:14.3px;color:#374151;letter-spacing:0.5px;right:949.50px;">576,<span style="margin-left:-0.9px;letter-spacing:-0.8px">1</span>4 €</div>
<div class="t" style="top:736.70px;font-size:14.3px;color:#374151;letter-spacing:0.5px;right:674.00px;"><span style="margin-left:-0.9px;letter-spacing:-0.8px">1</span><span style="margin-left:-0.9px;letter-spacing:-0.8px">1</span>7,25 €</div>
<div class="t" style="top:736.70px;font-size:14.3px;color:#374151;letter-spacing:0.5px;right:469.50px;">693,39 €</div>
<div class="t" style="top:736.70px;font-size:14.3px;color:#374151;letter-spacing:0.5px;right:343.00px;"><span style="margin-left:-0.9px;letter-spacing:-0.8px">1</span>0</div>
<div class="t" style="top:736.70px;font-size:14.3px;color:#111827;font-weight:700;letter-spacing:0.55px;right:167.00px;">762,73 €</div>
<svg class="abs" style="left:1859px;top:735px" width="18" height="17" viewBox="0 0 18 17" fill="none" stroke="#2a86bf" stroke-width="1.05" stroke-linecap="round" stroke-linejoin="round"><path d="M2.2 14.8L3.3 11.1 13.1 1.4A1.35 1.35 0 0 1 15 3.3L5.2 13.1Z"/></svg>
<div class="abs" style="left:280px;top:765px;width:1616px;height:42px;border-bottom:1px solid #e5e7eb"></div>
<div class="t" style="top:778.70px;font-size:14.3px;color:#374151;letter-spacing:0.4px;left:296.3px;">9-<span style="margin-left:-0.9px;letter-spacing:-0.8px">1</span>0</div>
<div class="t" style="top:778.70px;font-size:14.3px;color:#0288d1;-webkit-text-stroke:0.25px #0288d1;left:438.8px;">Matthias Huber</div>
<div class="t" style="top:778.70px;font-size:14.3px;color:#374151;letter-spacing:0.5px;right:1096.90px;">6,27</div>
<div class="t" style="top:778.70px;font-size:14.3px;color:#374151;letter-spacing:0.5px;right:949.50px;">784,45 €</div>
<div class="t" style="top:778.70px;font-size:14.3px;color:#374151;letter-spacing:0.5px;right:674.00px;"><span style="margin-left:-0.9px;letter-spacing:-0.8px">1</span>56,75 €</div>
<div class="t" style="top:778.70px;font-size:14.3px;color:#374151;letter-spacing:0.5px;right:469.50px;">94<span style="margin-left:-0.9px;letter-spacing:-0.8px">1</span>,20 €</div>
<div class="t" style="top:778.70px;font-size:14.3px;color:#374151;letter-spacing:0.5px;right:343.00px;"><span style="margin-left:-0.9px;letter-spacing:-0.8px">1</span>0</div>
<div class="t" style="top:778.70px;font-size:14.3px;color:#111827;font-weight:700;letter-spacing:0.55px;right:167.00px;"><span style="margin-left:-0.9px;letter-spacing:-0.8px">1</span>.035,32 €</div>
<svg class="abs" style="left:1859px;top:777px" width="18" height="17" viewBox="0 0 18 17" fill="none" stroke="#2a86bf" stroke-width="1.05" stroke-linecap="round" stroke-linejoin="round"><path d="M2.2 14.8L3.3 11.1 13.1 1.4A1.35 1.35 0 0 1 15 3.3L5.2 13.1Z"/></svg>
<div class="abs" style="left:280px;top:807px;width:1616px;height:42px;border-bottom:1px solid #e5e7eb"></div>
<div class="t" style="top:820.70px;font-size:14.3px;color:#374151;letter-spacing:0.4px;left:296.3px;"><span style="margin-left:-0.9px;letter-spacing:-0.8px">1</span><span style="margin-left:-0.9px;letter-spacing:-0.8px">1</span>-<span style="margin-left:-0.9px;letter-spacing:-0.8px">1</span>2</div>
<div class="t" style="top:820.70px;font-size:14.3px;color:#0288d1;-webkit-text-stroke:0.25px #0288d1;left:438.8px;">Markus Wagner</div>
<div class="t" style="top:820.70px;font-size:14.3px;color:#374151;letter-spacing:0.5px;right:1096.90px;">3,67</div>
<div class="t" style="top:820.70px;font-size:14.3px;color:#374151;letter-spacing:0.5px;right:949.50px;">502,69 €</div>
<div class="t" style="top:820.70px;font-size:14.3px;color:#374151;letter-spacing:0.5px;right:674.00px;">9<span style="margin-left:-0.9px;letter-spacing:-0.8px">1</span>,75 €</div>
<div class="t" style="top:820.70px;font-size:14.3px;color:#374151;letter-spacing:0.5px;right:469.50px;">594,44 €</div>
<div class="t" style="top:820.70px;font-size:14.3px;color:#374151;letter-spacing:0.5px;right:343.00px;"><span style="margin-left:-0.9px;letter-spacing:-0.8px">1</span>0</div>
<div class="t" style="top:820.70px;font-size:14.3px;color:#111827;font-weight:700;letter-spacing:0.55px;right:167.00px;">653,88 €</div>
<svg class="abs" style="left:1859px;top:819px" width="18" height="17" viewBox="0 0 18 17" fill="none" stroke="#2a86bf" stroke-width="1.05" stroke-linecap="round" stroke-linejoin="round"><path d="M2.2 14.8L3.3 11.1 13.1 1.4A1.35 1.35 0 0 1 15 3.3L5.2 13.1Z"/></svg>
<div class="abs" style="left:280px;top:849px;width:1616px;height:42px;border-bottom:1px solid #e5e7eb"></div>
<div class="t" style="top:862.70px;font-size:14.3px;color:#374151;letter-spacing:0.4px;left:296.3px;"><span style="margin-left:-0.9px;letter-spacing:-0.8px">1</span>3</div>
<div class="t" style="top:862.70px;font-size:14.3px;color:#0288d1;-webkit-text-stroke:0.25px #0288d1;left:438.8px;">Sabine Schuster</div>
<div class="t" style="top:862.70px;font-size:14.3px;color:#374151;letter-spacing:0.5px;right:1096.90px;">2,75</div>
<div class="t" style="top:862.70px;font-size:14.3px;color:#374151;letter-spacing:0.5px;right:949.50px;">398,03 €</div>
<div class="t" style="top:862.70px;font-size:14.3px;color:#374151;letter-spacing:0.5px;right:674.00px;">68,75 €</div>
<div class="t" style="top:862.70px;font-size:14.3px;color:#374151;letter-spacing:0.5px;right:469.50px;">466,78 €</div>
<div class="t" style="top:862.70px;font-size:14.3px;color:#374151;letter-spacing:0.5px;right:343.00px;"><span style="margin-left:-0.9px;letter-spacing:-0.8px">1</span>0</div>
<div class="t" style="top:862.70px;font-size:14.3px;color:#111827;font-weight:700;letter-spacing:0.55px;right:167.00px;">5<span style="margin-left:-0.9px;letter-spacing:-0.8px">1</span>3,46 €</div>
<svg class="abs" style="left:1859px;top:861px" width="18" height="17" viewBox="0 0 18 17" fill="none" stroke="#2a86bf" stroke-width="1.05" stroke-linecap="round" stroke-linejoin="round"><path d="M2.2 14.8L3.3 11.1 13.1 1.4A1.35 1.35 0 0 1 15 3.3L5.2 13.1Z"/></svg>
<div class="abs" style="left:280px;top:891px;width:1616px;height:37px;background:#f9fafb;border-bottom:1px solid #e5e7eb"></div>
<div class="t" style="top:901.50px;font-size:14.3px;color:#4b5563;font-style:italic;left:296.4px;">14</div>
<div class="t" style="top:901.50px;font-size:14.3px;color:#6b7280;-webkit-text-stroke:0.15px #6b7280;font-style:italic;left:439.4px;">Leerstand</div>
<div class="abs" style="left:280px;top:928px;width:1616px;height:42px;border-bottom:1px solid #e5e7eb"></div>
<div class="t" style="top:941.70px;font-size:14.3px;color:#374151;letter-spacing:0.4px;left:296.3px;"><span style="margin-left:-0.9px;letter-spacing:-0.8px">1</span>5</div>
<div class="t" style="top:941.70px;font-size:14.3px;color:#0288d1;-webkit-text-stroke:0.25px #0288d1;left:438.8px;">Vesna Stojanovic</div>
<div class="t" style="top:941.70px;font-size:14.3px;color:#374151;letter-spacing:0.5px;right:1096.90px;"><span style="margin-left:-0.9px;letter-spacing:-0.8px">1</span>,52</div>
<div class="t" style="top:941.70px;font-size:14.3px;color:#374151;letter-spacing:0.5px;right:949.50px;"><span style="margin-left:-0.9px;letter-spacing:-0.8px">1</span>86,00 €</div>
<div class="t" style="top:941.70px;font-size:14.3px;color:#374151;letter-spacing:0.5px;right:674.00px;">38,00 €</div>
<div class="t" style="top:941.70px;font-size:14.3px;color:#374151;letter-spacing:0.5px;right:469.50px;">224,00 €</div>
<div class="t" style="top:941.70px;font-size:14.3px;color:#374151;letter-spacing:0.5px;right:343.00px;"><span style="margin-left:-0.9px;letter-spacing:-0.8px">1</span>0</div>
<div class="t" style="top:941.70px;font-size:14.3px;color:#111827;font-weight:700;letter-spacing:0.55px;right:167.00px;">246,40 €</div>
<svg class="abs" style="left:1859px;top:940px" width="18" height="17" viewBox="0 0 18 17" fill="none" stroke="#2a86bf" stroke-width="1.05" stroke-linecap="round" stroke-linejoin="round"><path d="M2.2 14.8L3.3 11.1 13.1 1.4A1.35 1.35 0 0 1 15 3.3L5.2 13.1Z"/></svg>
<div class="abs" style="left:280px;top:970px;width:1616px;height:42px;border-bottom:1px solid #e5e7eb"></div>
<div class="t" style="top:983.70px;font-size:14.3px;color:#374151;letter-spacing:0.4px;left:296.3px;"><span style="margin-left:-0.9px;letter-spacing:-0.8px">1</span>6</div>
<div class="t" style="top:983.70px;font-size:14.3px;color:#0288d1;-webkit-text-stroke:0.25px #0288d1;left:438.8px;">Arben Hoxha</div>
<div class="t" style="top:983.70px;font-size:14.3px;color:#374151;letter-spacing:0.5px;right:1096.90px;"><span style="margin-left:-0.9px;letter-spacing:-0.8px">1</span>,8<span style="margin-left:-0.9px;letter-spacing:-0.8px">1</span></div>
<div class="t" style="top:983.70px;font-size:14.3px;color:#374151;letter-spacing:0.5px;right:949.50px;">303,93 €</div>
<div class="t" style="top:983.70px;font-size:14.3px;color:#374151;letter-spacing:0.5px;right:674.00px;">45,25 €</div>
<div class="t" style="top:983.70px;font-size:14.3px;color:#374151;letter-spacing:0.5px;right:469.50px;">349,<span style="margin-left:-0.9px;letter-spacing:-0.8px">1</span>8 €</div>
<div class="t" style="top:983.70px;font-size:14.3px;color:#374151;letter-spacing:0.5px;right:343.00px;"><span style="margin-left:-0.9px;letter-spacing:-0.8px">1</span>0</div>
<div class="t" style="top:983.70px;font-size:14.3px;color:#111827;font-weight:700;letter-spacing:0.55px;right:167.00px;">384,<span style="margin-left:-0.9px;letter-spacing:-0.8px">1</span>0 €</div>
<svg class="abs" style="left:1859px;top:982px" width="18" height="17" viewBox="0 0 18 17" fill="none" stroke="#2a86bf" stroke-width="1.05" stroke-linecap="round" stroke-linejoin="round"><path d="M2.2 14.8L3.3 11.1 13.1 1.4A1.35 1.35 0 0 1 15 3.3L5.2 13.1Z"/></svg>
<div class="abs" style="left:280px;top:1012px;width:1616px;height:42px;border-bottom:1px solid #e5e7eb"></div>
<div class="t" style="top:1025.70px;font-size:14.3px;color:#374151;letter-spacing:0.4px;left:296.3px;"><span style="margin-left:-0.9px;letter-spacing:-0.8px">1</span>7</div>
<div class="t" style="top:1025.70px;font-size:14.3px;color:#0288d1;-webkit-text-stroke:0.25px #0288d1;left:438.8px;">F.M.M.</div>
<div class="t" style="top:1025.70px;font-size:14.3px;color:#374151;letter-spacing:0.5px;right:1096.90px;">0,00</div>
<div class="t" style="top:1025.70px;font-size:14.3px;color:#374151;letter-spacing:0.5px;right:949.50px;">0,00 €</div>
<div class="t" style="top:1025.70px;font-size:14.3px;color:#374151;letter-spacing:0.5px;right:674.00px;"><span style="margin-left:-0.9px;letter-spacing:-0.8px">1</span><span style="margin-left:-0.9px;letter-spacing:-0.8px">1</span><span style="margin-left:-0.9px;letter-spacing:-0.8px">1</span>,75 €</div>
<div class="t" style="top:1025.70px;font-size:14.3px;color:#374151;letter-spacing:0.5px;right:469.50px;"><span style="margin-left:-0.9px;letter-spacing:-0.8px">1</span><span style="margin-left:-0.9px;letter-spacing:-0.8px">1</span><span style="margin-left:-0.9px;letter-spacing:-0.8px">1</span>,75 €</div>
<div class="t" style="top:1025.70px;font-size:14.3px;color:#374151;letter-spacing:0.5px;right:343.00px;">20</div>
<div class="t" style="top:1025.70px;font-size:14.3px;color:#111827;font-weight:700;letter-spacing:0.55px;right:167.00px;"><span style="margin-left:-0.9px;letter-spacing:-0.8px">1</span>34,<span style="margin-left:-0.9px;letter-spacing:-0.8px">1</span>0 €</div>
<svg class="abs" style="left:1859px;top:1024px" width="18" height="17" viewBox="0 0 18 17" fill="none" stroke="#2a86bf" stroke-width="1.05" stroke-linecap="round" stroke-linejoin="round"><path d="M2.2 14.8L3.3 11.1 13.1 1.4A1.35 1.35 0 0 1 15 3.3L5.2 13.1Z"/></svg>
<div class="abs" style="left:280px;top:1054px;width:1616px;height:42px;border-bottom:1px solid #e5e7eb"></div>
<div class="t" style="top:1067.70px;font-size:14.3px;color:#374151;letter-spacing:0.4px;left:296.3px;"><span style="margin-left:-0.9px;letter-spacing:-0.8px">1</span>8</div>
<div class="t" style="top:1067.70px;font-size:14.3px;color:#0288d1;-webkit-text-stroke:0.25px #0288d1;left:438.8px;">Sukhwinder Singh</div>
<div class="t" style="top:1067.70px;font-size:14.3px;color:#374151;letter-spacing:0.5px;right:1096.90px;"><span style="margin-left:-0.9px;letter-spacing:-0.8px">1</span>,88</div>
<div class="t" style="top:1067.70px;font-size:14.3px;color:#374151;letter-spacing:0.5px;right:949.50px;">278,40 €</div>
<div class="t" style="top:1067.70px;font-size:14.3px;color:#374151;letter-spacing:0.5px;right:674.00px;">47,00 €</div>
<div class="t" style="top:1067.70px;font-size:14.3px;color:#374151;letter-spacing:0.5px;right:469.50px;">325,40 €</div>
<div class="t" style="top:1067.70px;font-size:14.3px;color:#374151;letter-spacing:0.5px;right:343.00px;"><span style="margin-left:-0.9px;letter-spacing:-0.8px">1</span>0</div>
<div class="t" style="top:1067.70px;font-size:14.3px;color:#111827;font-weight:700;letter-spacing:0.55px;right:167.00px;">357,94 €</div>
<svg class="abs" style="left:1859px;top:1066px" width="18" height="17" viewBox="0 0 18 17" fill="none" stroke="#2a86bf" stroke-width="1.05" stroke-linecap="round" stroke-linejoin="round"><path d="M2.2 14.8L3.3 11.1 13.1 1.4A1.35 1.35 0 0 1 15 3.3L5.2 13.1Z"/></svg>
<div class="abs" style="left:1857px;top:953px;width:46px;height:46px;background:#fff;border-radius:50%;box-shadow:0 2px 8px rgba(0,0,0,0.12),0 0 0 1px rgba(0,0,0,0.03)"></div>
<svg class="abs" style="left:1871px;top:963px" width="18" height="26" viewBox="0 0 18 26" fill="none" stroke="#4b5563" stroke-width="1.5" stroke-linecap="round" stroke-linejoin="round"><rect x="3" y="2" width="12" height="21" rx="2.2"/><path d="M7.5 20h3M7.5 3.5h3"/></svg>
<svg class="abs" style="left:1860px;top:1020px" width="48" height="48" viewBox="0 0 48 48">
<defs>
<linearGradient id="ring" x1="0" y1="0" x2="0.3" y2="1"><stop offset="0" stop-color="#7fcf6a"/><stop offset="0.45" stop-color="#e0c878"/><stop offset="1" stop-color="#a6d22a"/></linearGradient>
<linearGradient id="sky" x1="0" y1="0" x2="0" y2="1"><stop offset="0.05" stop-color="#7fd0f0"/><stop offset="0.3" stop-color="#f6d9a2"/><stop offset="0.7" stop-color="#f7a58a"/></linearGradient>
<linearGradient id="isl" x1="0" y1="0" x2="0" y2="1"><stop offset="0" stop-color="#e2ea2a"/><stop offset="1" stop-color="#5cb82a"/></linearGradient>
<clipPath id="cp"><circle cx="24" cy="24" r="20.5"/></clipPath>
</defs>
<circle cx="24" cy="24" r="24" fill="url(#ring)"/>
<g clip-path="url(#cp)">
<rect x="0" y="0" width="48" height="48" fill="url(#sky)"/>
<circle cx="37" cy="11" r="5" fill="#f6b21e"/>
<path d="M28 6l1.5 1M27 9.5l1.8.3M28 13l1.5-.5M31 16l.8-1.3M34.5 18l.2-1.5M38 18.5l-.3-1.4" stroke="#f6b21e" stroke-width="0.8"/>
<rect x="0" y="30" width="48" height="7" fill="#1d7fa8"/>
<path d="M2 32.5h44M2 35h44" stroke="#7fd0e8" stroke-width="0.8"/>
<ellipse cx="24" cy="43" rx="15" ry="10" fill="url(#isl)"/>
<path d="M17 35c0-6 .5-10 2-13" stroke="#7a4a1a" stroke-width="1.8" fill="none"/>
<path d="M19 21c-4-3-9-2-11 2M19 21c-1-4-4-6-8-5M19 21c3-3 8-3 10 1M19 21c2-2 6-1 7 3M19 21c-3 0-6 3-6 6" stroke="#2f9a2a" stroke-width="2.8" fill="none" stroke-linecap="round"/>
<path d="M24 27l2 5h6l1 -2" stroke="#e8456a" stroke-width="1.3" fill="none"/>
</g>
</svg>
</body></html>
